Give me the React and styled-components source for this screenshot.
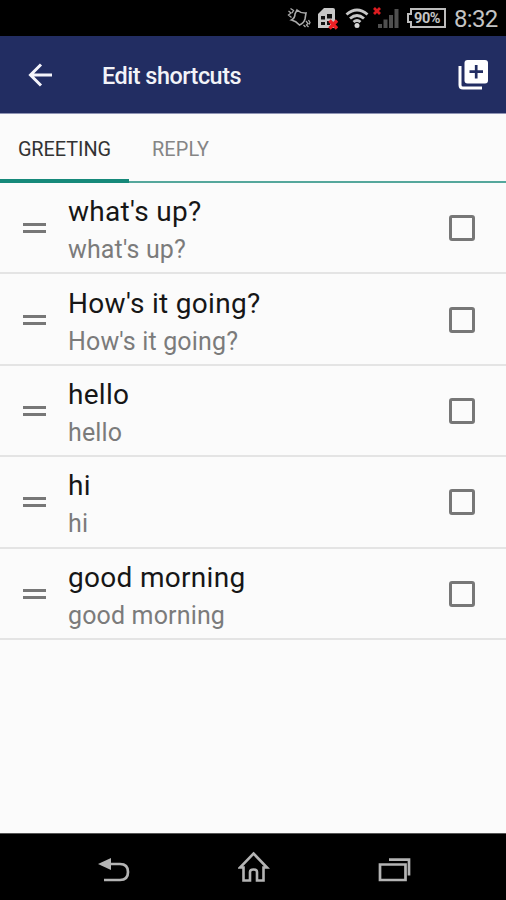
import React, { useState } from 'react';
import styled, { createGlobalStyle } from 'styled-components';

const GlobalStyle = createGlobalStyle`
  * {
    box-sizing: border-box;
  }
  body {
    margin: 0;
    background: #fbfbfb;
    font-family: Roboto, "Liberation Sans", sans-serif;
  }
`

const Screen = styled.div`
  display: flex;
  flex-direction: column;
  width: 506px;
  height: 900px;
  overflow: hidden;
  background: #fbfbfb;
`

const StatusBar = styled.div`
  display: flex;
  align-items: center;
  justify-content: flex-end;
  height: 36px;
  padding-right: 8px;
  background: #000;
  color: #c4c4c4;
`

const StatusIcon = styled.svg`
  display: block;
  flex: none;
  width: ${props => props.$width}px;
  height: 36px;
  margin-right: ${props => props.$gap}px;
`

const Battery = styled.div`
  position: relative;
  display: flex;
  width: 40px;
  height: 36px;
  margin-right: 8px;
  align-items: center;
  justify-content: center;
`

const BatteryOutline = styled.svg`
  position: absolute;
  left: 0;
  top: 0;
`

const BatteryText = styled.span`
  padding-left: 2px;
  font-size: 14.5px;
  font-weight: 700;
  letter-spacing: -0.5px;
`

const Clock = styled.span`
  width: 44px;
  padding-top: 1px;
  font-size: 24px;
  letter-spacing: -0.7px;
  white-space: nowrap;
`

const AppBar = styled.header`
  display: flex;
  align-items: center;
  height: 78px;
  padding: 0 17px 0 28px;
  background: #222d62;
  border-bottom: 1px solid #8f94b4;
  color: #f2f3f8;
`

const IconButton = styled.button`
  display: flex;
  padding: 0;
  border: none;
  background: transparent;
  cursor: pointer;
`

const Heading = styled.h1`
  flex: 1;
  margin: 0 0 0 50px;
  padding-top: 2px;
  font-size: 23.4px;
  font-weight: 500;
  letter-spacing: -0.48px;
`

const Tabs = styled.nav`
  display: flex;
  height: 69px;
  box-shadow: inset 0 -2px 0 #55a79c;
`

const Tab = styled.button`
  width: ${props => props.$width}px;
  padding: 6px 0 0;
  border: none;
  border-bottom: 4px solid ${props => props.$active ? '#16897a' : 'transparent'};
  background: transparent;
  color: ${props => props.$active ? '#333' : '#858585'};
  font-family: inherit;
  font-size: 19.9px;
  letter-spacing: ${props => props.$spacing}px;
  cursor: pointer;
`

const List = styled.ul`
  display: grid;
  grid-template-rows: repeat(5, 91.4px);
  flex: 1;
  margin: 0;
  padding: 0;
  list-style: none;
`

const Row = styled.li`
  display: flex;
  align-items: center;
  padding: 1px 31px 0 23px;
  border-bottom: 2px solid #e4e4e4;
`

const Handle = styled.span`
  width: 23px;
  height: 10px;
  margin-right: 22px;
  border: solid #777;
  border-width: 3px 0;
`

const Texts = styled.div`
  display: flex;
  flex: 1;
  flex-direction: column;
  padding-top: 6px;
`

const Phrase = styled.span`
  color: #161616;
  font-size: 28px;
  line-height: 38px;
  letter-spacing: 0.3px;
`

const Detail = styled.span`
  color: #7b7b7b;
  font-size: 25px;
  line-height: 38px;
  letter-spacing: 0.15px;
`

const Check = styled.button`
  width: 26px;
  height: 26px;
  padding: 0;
  border: 3px solid #777;
  border-radius: 3px;
  background: ${props => props.$checked ? '#16897a' : 'transparent'};
  cursor: pointer;
`

const NavBar = styled.footer`
  display: flex;
  justify-content: space-between;
  align-items: center;
  height: 67px;
  padding: 6px 95px 0 97px;
  background: #000;
  border-top: 1px solid #555;
`

const shortcuts = {
    GREETING: ["what's up?", "How's it going?", 'hello', 'hi', 'good morning'],
    REPLY: [],
};

function StatusIcons() {
    return (
        <>
            <StatusIcon $width={24} $gap={6} viewBox="0 0 24 36" fill="none" stroke="#aaa" strokeWidth="1.6">
                <path d="M10 10 Q14 13.5 19 13 L18 19 Q17 23 12.5 25 Q9 21 4.5 20 Q8 18 8 14 Z" />
                <path d="M1.5 11 l2.5 2 -2.5 2 3 2.5 M3.5 8.5 l3 2 -1.5 2.5 M16.5 25 l2 2 M19 21 l2 2.5 -1.5 1.5 2 2 M21.5 20 l1.5 2.5 -1 2" strokeWidth="1.3" />
            </StatusIcon>
            <StatusIcon $width={21} $gap={7} viewBox="0 0 21 36">
                <path d="M1 28 V14 L7 8 H16 Q18 8 18 10 V28 Z" fill="#c8c8c8" />
                <path d="M4 16 h4 v3.5 h-4 z M10 14 h5 v4.5 h-5 z M4 22 h4 v3 h-4 z M10 21 h3 v4 h-3 z" fill="#111" />
                <path d="M12.5 20.5 l7.5 8 M20 20.5 l-7.5 8" stroke="#ed2024" strokeWidth="3.4" />
            </StatusIcon>
            <StatusIcon $width={24} $gap={3} viewBox="0 0 24 36" fill="none" stroke="#c6c6c6" strokeWidth="2.9">
                <path d="M1.5 14.5 Q12 5.5 22.5 14.5 M5 18.5 Q12 12.5 19 18.5 M8.5 22 Q12 19 15.5 22" />
                <circle cx="12" cy="25.4" r="2.5" fill="#d8d8d8" stroke="none" />
            </StatusIcon>
            <StatusIcon $width={27} $gap={7} viewBox="0 0 27 36">
                <path d="M2 8 l6 6 M8 8 l-6 6" stroke="#dc1c20" strokeWidth="2.8" />
                <path d="M6 24 h4 v4 h-4 z M11.5 19.5 h4 v8.5 h-4 z M17 15 h4 v13 h-4 z M22.5 9 h4 v19 h-4 z" fill="#505050" />
            </StatusIcon>
        </>
    );
}

function App() {
    const [tab, setTab] = useState('GREETING');
    const [checked, setChecked] = useState([]);

    const toggle = (text) => {
        setChecked(checked.includes(text) ? checked.filter(c => c !== text) : [...checked, text]);
    };

    return (
        <Screen>
            <GlobalStyle />
            <StatusBar>
                <StatusIcons />
                <Battery>
                    <BatteryOutline width="40" height="36" fill="none" stroke="#bdbdbd" strokeWidth="2">
                        <path d="M5 9 H39 V27 H5 V22 H2 V14 H5 Z" />
                    </BatteryOutline>
                    <BatteryText>90%</BatteryText>
                </Battery>
                <Clock>8:32</Clock>
            </StatusBar>
            <AppBar>
                <IconButton aria-label="Back">
                    <svg width="24" height="24" viewBox="0 0 24 24" fill="none" stroke="#f4f4fa" strokeWidth="3">
                        <path d="M24 12 H3 M13 1.5 L2.5 12 L13 22.5" />
                    </svg>
                </IconButton>
                <Heading>Edit shortcuts</Heading>
                <IconButton aria-label="Add">
                    <svg width="31" height="31" viewBox="0 0 31 31">
                        <path d="M2 7 V26 Q2 29 5 29 H24" fill="none" stroke="#fff" strokeWidth="3" />
                        <rect x="6.5" y="1" width="23.5" height="23.5" rx="3" fill="#fff" />
                        <path d="M18.2 6 V19.5 M11.5 12.7 H25" stroke="#222d62" strokeWidth="2.7" />
                    </svg>
                </IconButton>
            </AppBar>
            <Tabs>
                <Tab $width={129} $spacing={-0.05} $active={tab === 'GREETING'} onClick={() => setTab('GREETING')}>GREETING</Tab>
                <Tab $width={103} $spacing={0.1} $active={tab === 'REPLY'} onClick={() => setTab('REPLY')}>REPLY</Tab>
            </Tabs>
            <List>
                {shortcuts[tab].map(text => (
                    <Row key={text}>
                        <Handle />
                        <Texts>
                            <Phrase>{text}</Phrase>
                            <Detail>{text}</Detail>
                        </Texts>
                        <Check aria-label={text} $checked={checked.includes(text)} onClick={() => toggle(text)} />
                    </Row>
                ))}
            </List>
            <NavBar>
                <svg width="33" height="28" viewBox="0 0 33 28">
                    <path d="M10 8 H23 Q31 8 31 16 Q31 24 23 24 H7" fill="none" stroke="#b4b4b4" strokeWidth="2.7" />
                    <path d="M1 8 L14 2 V14 Z" fill="#b4b4b4" />
                </svg>
                <svg width="32" height="38" viewBox="0 0 32 38" fill="none" stroke="#b4b4b4" strokeWidth="2.6">
                    <path d="M15.5 2.5 L29 16.5 H25.5 V29.5 H19 V21 Q19 18.5 15.5 18.5 Q12 18.5 12 21 V29.5 H5.5 V16.5 H2 Z" />
                </svg>
                <svg width="33" height="26" viewBox="0 0 33 26" fill="none" stroke="#b4b4b4" strokeWidth="2.7">
                    <path d="M2 7.5 H27.5 V23 H2 Z" />
                    <path d="M11 2.7 H31 V18.5" />
                </svg>
            </NavBar>
        </Screen>
    );
}

export default App;
